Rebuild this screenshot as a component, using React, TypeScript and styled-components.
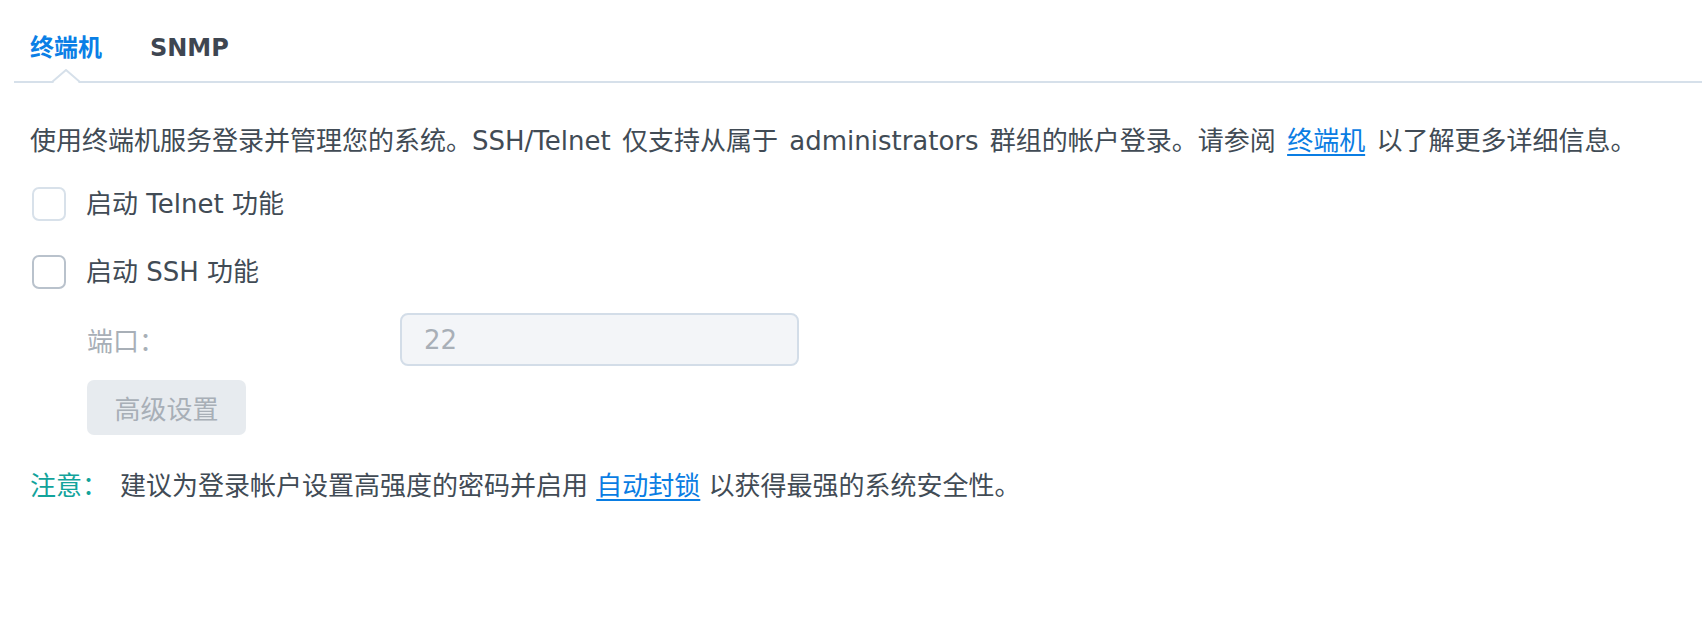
import React from 'react';
import styled, { createGlobalStyle } from 'styled-components';

const GlobalStyle = createGlobalStyle`
  body {
    margin: 0;
    background: #fff;
    font-family: 'DejaVu Sans', 'Noto Sans CJK SC', sans-serif;
    color: #414b55;
  }
  * {
    box-sizing: border-box;
  }
`;

const Wrap = styled.div`
  padding-left: 14px;
  width: 1702px;
  height: 630px;
  overflow: hidden;
`;

const TabBar = styled.div`
  display: flex;
  gap: 16px;
  height: 83px;
  border-bottom: 2px solid #d6e0ea;
`;

const Tab = styled.div<{ $active?: boolean }>`
  position: relative;
  padding: 15px 16px 0;
  height: 81px;
  line-height: 66px;
  font-size: 24px;
  font-weight: 700;
  color: ${(props) => (props.$active ? '#0a7fe6' : '#3e4651')};
  cursor: pointer;

  svg {
    position: absolute;
    left: 50%;
    bottom: -3px;
    transform: translateX(-50%);
  }
`;

const Contents = styled.div`
  padding: 40px 0 0 16px;
  font-size: 26px;
`;

const Intro = styled.p`
  margin: 0;
  line-height: 36px;
  white-space: nowrap;
  word-spacing: 3px;
`;

const Link = styled.a`
  color: #0a7de3;
  text-decoration: underline;
  text-underline-offset: 4px;
  text-decoration-thickness: 2px;
  cursor: pointer;
`;

const Options = styled.div`
  display: flex;
  flex-direction: column;
  gap: 34px;
  margin-top: 28px;
`;

const CheckRow = styled.label`
  display: flex;
  align-items: center;
  gap: 20px;
  height: 34px;
  padding-left: 2px;
  line-height: 34px;
`;

const Box = styled.span<{ $hover?: boolean }>`
  width: 34px;
  height: 34px;
  border: 2px solid ${(props) => (props.$hover ? '#b9c2cc' : '#d8e1ea')};
  border-radius: 7px;
  background: #fff;
  flex: none;
`;

const SshSettings = styled.div`
  padding-left: 57px;
  margin-top: 24px;
`;

const FieldRow = styled.div`
  display: grid;
  grid-template-columns: 313px 399px;
  align-items: center;
`;

const FieldLabel = styled.span`
  color: #a8afb7;
  line-height: 36px;
  padding-top: 4px;
`;

const Input = styled.input`
  height: 53px;
  width: 399px;
  border: 2px solid #d3dde8;
  border-radius: 8px;
  background: #f3f5f8;
  padding: 0 22px;
  font: inherit;
  font-size: 26px;
  color: #a8afb7;
  outline: none;
`;

const Button = styled.button`
  margin-top: 14px;
  width: 159px;
  height: 55px;
  border: none;
  border-radius: 7px;
  background: #e7ebef;
  color: #a8afb7;
  font: inherit;
  font-size: 26px;
  padding: 0;
`;

const Note = styled.p`
  margin: 33px 0 0;
  line-height: 36px;
  white-space: nowrap;

  strong {
    font-weight: 400;
    color: #12a39b;
    margin-right: 12px;
  }
`;

function Caret() {
  return (
    <svg width='28' height='15' viewBox='0 0 28 15'>
      <path d='M1 14 L14 2 L27 14 Z' fill='#fff' />
      <rect x='2' y='12' width='24' height='3' fill='#fff' />
      <path d='M0 13 L14 1 L28 13' stroke='#d6e0ea' strokeWidth='2' fill='none' />
    </svg>
  );
}

export default function App() {
  return (
    <>
      <GlobalStyle />
      <Wrap>
        <TabBar>
          <Tab $active>
            终端机
            <Caret />
          </Tab>
          <Tab>SNMP</Tab>
        </TabBar>
        <Contents>
          <Intro>
            使用终端机服务登录并管理您的系统。SSH/Telnet 仅支持从属于 administrators 群组的帐户登录。请参阅{' '}
            <Link>终端机</Link> 以了解更多详细信息。
          </Intro>
          <Options>
            <CheckRow>
              <Box />
              启动 Telnet 功能
            </CheckRow>
            <CheckRow>
              <Box $hover />
              启动 SSH 功能
            </CheckRow>
          </Options>
          <SshSettings>
            <FieldRow>
              <FieldLabel>端口：</FieldLabel>
              <Input type='text' value='22' disabled readOnly />
            </FieldRow>
            <Button disabled>高级设置</Button>
          </SshSettings>
          <Note>
            <strong>注意：</strong>
            建议为登录帐户设置高强度的密码并启用 <Link>自动封锁</Link> 以获得最强的系统安全性。
          </Note>
        </Contents>
      </Wrap>
    </>
  );
}
